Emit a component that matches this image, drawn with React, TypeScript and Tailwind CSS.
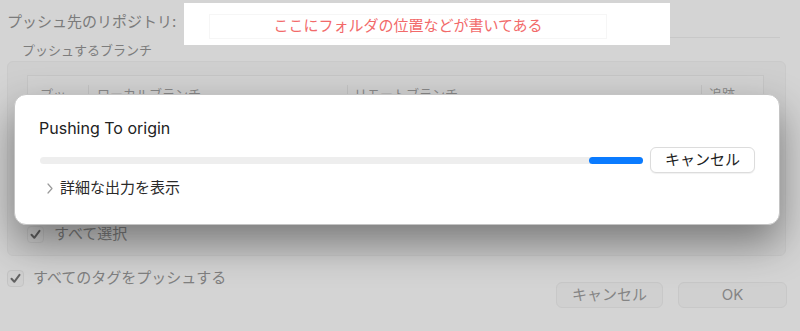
import { ReactNode } from 'react'

function Check({ children, gap }: { children: ReactNode; gap: string }) {
  return (
    <div className={`flex items-center ${gap}`}>
      <div className="flex h-[17px] w-[17px] items-center justify-center rounded-[4px] border border-[#c4c4c4] bg-[#d0d0d0]">
        <svg width="13" height="13" viewBox="0 0 13 13" fill="none">
          <path d="M2.5 6.8 L5.3 9.8 L10.5 2.8" stroke="#626262" strokeWidth="2" strokeLinecap="round" strokeLinejoin="round" />
        </svg>
      </div>
      <span className="text-[15px] leading-5 text-[#808080]">{children}</span>
    </div>
  )
}

function PushSheet() {
  return (
    <div className="flex flex-col">
      {/* Destination repository row */}
      <div className="flex items-start pt-[3px] pl-[7px]">
        <span className="mt-[9px] w-[171px] shrink-0 whitespace-nowrap text-[15px] leading-5 text-[#7b7b7b]">
          プッシュ先のリポジトリ:
        </span>
        <div className="ml-[6px] h-[42px] w-[486px] shrink-0 bg-white pt-[11px] pl-[25px]">
          <div className="flex h-[25px] w-[398px] items-center justify-center border border-[#f6f6f6] text-[15px] text-[#f26a6a]">
            ここにフォルダの位置などが書いてある
          </div>
        </div>
        <div className="mt-[34px] h-px w-[110px] bg-[#c8c8c8]" />
      </div>

      <span className="-mt-[2px] pl-[22px] text-[13px] leading-[15px] text-[#7d7d7d]">プッシュするブランチ</span>

      {/* Branch group */}
      <div className="mt-[3px] ml-[7px] h-[195px] w-[779px] rounded-[6px] border border-[#cacaca] bg-[#cfcfcf] pt-[13px] pl-[19px]">
        <div className="h-[140px] w-[737px] border border-[#c6c6c6] bg-[#d2d2d2]">
          <div className="grid h-[28px] grid-cols-[60px_259px_354px_1fr] text-[13px] leading-4 text-[#8a8a8a]">
            <div className="pt-[10px] pl-[12px]">プッ...</div>
            <div className="mt-[9px] border-l border-[#c4c4c4] pt-[1px] pl-[8px]">ローカルブランチ</div>
            <div className="mt-[9px] border-l border-[#c4c4c4] pt-[1px] pl-[6px]">リモートブランチ</div>
            <div className="mt-[9px] border-l border-[#c4c4c4] pt-[1px] pl-[7px] whitespace-nowrap">追跡...</div>
          </div>
        </div>
        <div className="mt-[9px]">
          <Check gap="gap-[10px]">すべて選択</Check>
        </div>
      </div>

      {/* Footer */}
      <div className="mt-[12px] flex items-start justify-between pl-[7px] pr-[13px]">
        <Check gap="gap-[9px]">すべてのタグをプッシュする</Check>
        <div className="mt-[14px] flex gap-[15px] text-[15px] text-[#858585]">
          <button className="flex h-[26px] w-[107px] items-center justify-center rounded-[6px] border border-[#c8c8c8] bg-[#d0d0d0]">
            キャンセル
          </button>
          <button className="flex h-[26px] w-[109px] items-center justify-center rounded-[6px] border border-[#c8c8c8] bg-[#d0d0d0]">
            OK
          </button>
        </div>
      </div>
    </div>
  )
}

function PushDialog() {
  return (
    <div className="absolute top-[94px] left-[14px] h-[131px] w-[766px] rounded-[12px] border border-[#c4c4c4] bg-white px-6 pt-[23px] shadow-[0_18px_40px_rgba(0,0,0,0.42)]">
      <h2 className="text-[16px] leading-5 text-[#222]">Pushing To origin</h2>

      <div className="mt-[9px] flex items-center gap-[7px] pl-px">
        <div className="flex h-[7px] w-[604px] justify-end rounded-full bg-[#eeeeee]">
          <div className="h-[7px] w-[54px] rounded-full bg-[#0a7bff]" />
        </div>
        <button className="flex h-[26px] w-[105px] items-center justify-center rounded-[6px] border border-[#dcdcdc] bg-white text-[15px] text-[#222] shadow-[0_1px_1px_rgba(0,0,0,0.06)]">
          キャンセル
        </button>
      </div>

      <div className="mt-[5px] flex items-center gap-[7px] pl-[8px]">
        <svg width="6" height="11" viewBox="0 0 6 11" fill="none">
          <path d="M1 1 L5 5.5 L1 10" stroke="#9a9a9a" strokeWidth="1.2" strokeLinecap="round" strokeLinejoin="round" />
        </svg>
        <span className="text-[15px] leading-5 text-[#2a2a2a]">詳細な出力を表示</span>
      </div>
    </div>
  )
}

export default function App() {
  return (
    <div className="relative h-[331px] w-[800px] overflow-hidden bg-[#d4d4d4] font-['Inter','Noto_Sans_CJK_JP',sans-serif]">
      <PushSheet />
      <PushDialog />
    </div>
  )
}
